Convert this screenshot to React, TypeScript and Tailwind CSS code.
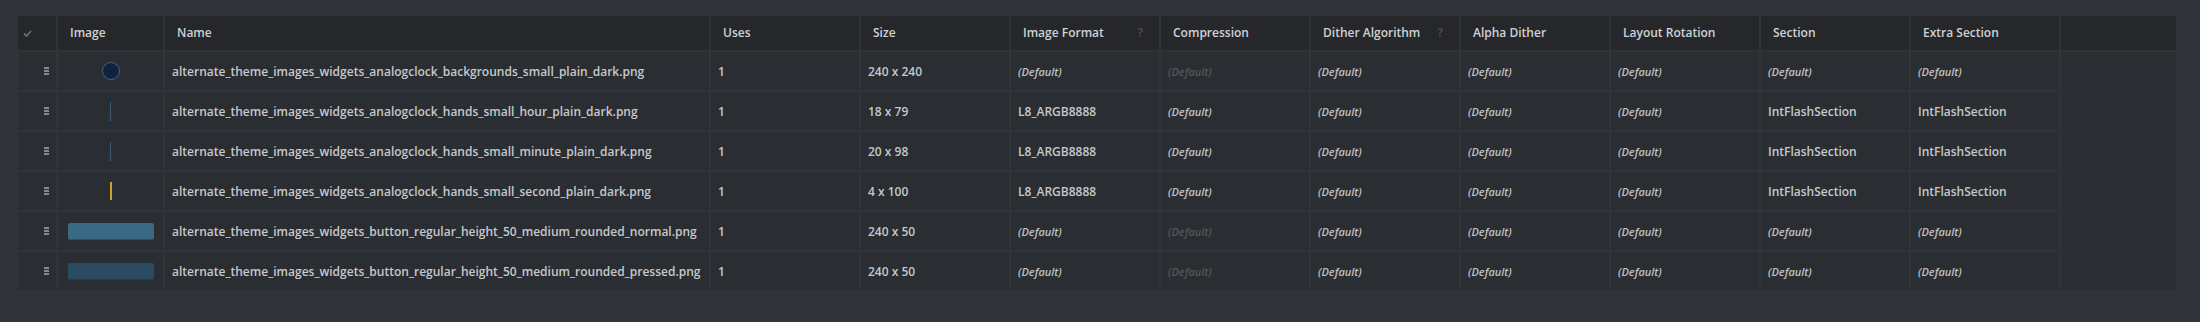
const font = { fontFamily: '"Open Sans", "Noto Sans", sans-serif' };

type Row = {
  thumb: 'clock' | 'hour' | 'minute' | 'second' | 'btn' | 'btnPressed';
  name: string;
  size: string;
  format: string;
  compressionDisabled: boolean;
  section: string;
};

const rows: Row[] = [
  { thumb: 'clock', name: 'alternate_theme_images_widgets_analogclock_backgrounds_small_plain_dark.png', size: '240 x 240', format: '', compressionDisabled: true, section: '' },
  { thumb: 'hour', name: 'alternate_theme_images_widgets_analogclock_hands_small_hour_plain_dark.png', size: '18 x 79', format: 'L8_ARGB8888', compressionDisabled: false, section: 'IntFlashSection' },
  { thumb: 'minute', name: 'alternate_theme_images_widgets_analogclock_hands_small_minute_plain_dark.png', size: '20 x 98', format: 'L8_ARGB8888', compressionDisabled: false, section: 'IntFlashSection' },
  { thumb: 'second', name: 'alternate_theme_images_widgets_analogclock_hands_small_second_plain_dark.png', size: '4 x 100', format: 'L8_ARGB8888', compressionDisabled: false, section: 'IntFlashSection' },
  { thumb: 'btn', name: 'alternate_theme_images_widgets_button_regular_height_50_medium_rounded_normal.png', size: '240 x 50', format: '', compressionDisabled: true, section: '' },
  { thumb: 'btnPressed', name: 'alternate_theme_images_widgets_button_regular_height_50_medium_rounded_pressed.png', size: '240 x 50', format: '', compressionDisabled: true, section: '' },
];

function Thumb({ kind }: { kind: Row['thumb'] }) {
  if (kind === 'clock')
    return <div className="w-[18px] h-[18px] rounded-full bg-[#0f2240] border border-[#3f6385]" />;
  if (kind === 'hour' || kind === 'minute')
    return (
      <div className="flex flex-col items-center">
        <div className="w-px h-[16px] bg-[#3c5a78]" />
        <div className="w-[3px] h-[3px] rounded-full border border-[#3c5a78]" />
      </div>
    );
  if (kind === 'second') return <div className="w-[2px] h-[18px] bg-[#d0a02a]" />;
  if (kind === 'btn')
    return <div className="w-[86px] h-[17px] rounded-[2px] bg-[#3a6983] border-b border-[#2c4f65]" />;
  return <div className="w-[86px] h-[17px] rounded-[2px] bg-[#2a4b62] border-b border-[#223d50]" />;
}

function Def({ dim }: { dim?: boolean }) {
  return (
    <span className={`italic text-[11px] ${dim ? 'text-[#54575c]' : 'text-[#bfc1c4]'}`}>(Default)</span>
  );
}

function Head({ label, help }: { label: string; help?: boolean }) {
  return (
    <div className="bg-[#25272b] flex items-center justify-between pl-3 pr-3 text-[12px] font-semibold text-[#cfd1d4]">
      <span>{label}</span>
      {help && <span className="text-[#4a4d52] text-[12px] pr-1">?</span>}
    </div>
  );
}

function Cell({ children }: { children: React.ReactNode }) {
  return (
    <div className="bg-[#2a2d31] flex items-center pl-[7px] pr-2 pt-[2px] text-[12px] font-semibold text-[#c6c8cb] whitespace-nowrap overflow-hidden">
      {children}
    </div>
  );
}

export default function App() {
  return (
    <div className="w-[2200px] h-[322px] bg-[#303338] pt-[16px] pl-[18px]" style={font}>
      <div className="grid grid-cols-[38px_105px_544px_repeat(9,148px)_115px] grid-rows-[34px_repeat(6,38px)] gap-[2px] w-max">
        <div className="bg-[#25272b] flex items-center pl-[5px]">
          <svg width="9" height="7" viewBox="0 0 9 7">
            <path d="M1 3.5 L3.5 6 L8 1" stroke="#6a6d72" strokeWidth="1.8" fill="none" />
          </svg>
        </div>
        <Head label="Image" />
        <Head label="Name" />
        <Head label="Uses" />
        <Head label="Size" />
        <Head label="Image Format" help />
        <Head label="Compression" />
        <Head label="Dither Algorithm" help />
        <Head label="Alpha Dither" />
        <Head label="Layout Rotation" />
        <Head label="Section" />
        <Head label="Extra Section" />
        <div className="bg-[#25272b]" />

        {rows.map((r, i) => (
          <div key={r.name} className="contents">
            <div className="bg-[#2a2d31] flex items-center justify-end pr-[7px]">
              <div className="flex flex-col gap-px">
                <div className="w-[5px] h-[2px] bg-[#85888c]" />
                <div className="w-[5px] h-[2px] bg-[#85888c]" />
                <div className="w-[5px] h-[2px] bg-[#85888c]" />
              </div>
            </div>
            <div className="bg-[#2a2d31] flex items-center justify-center">
              <Thumb kind={r.thumb} />
            </div>
            <Cell>{r.name}</Cell>
            <Cell>1</Cell>
            <Cell>{r.size}</Cell>
            <Cell>{r.format ? r.format : <Def />}</Cell>
            <Cell><Def dim={r.compressionDisabled} /></Cell>
            <Cell><Def /></Cell>
            <Cell><Def /></Cell>
            <Cell><Def /></Cell>
            <Cell>{r.section ? r.section : <Def />}</Cell>
            <Cell>{r.section ? r.section : <Def />}</Cell>
            {i === 0 && <div className="bg-[#2b2e32] row-span-6" />}
          </div>
        ))}
      </div>
    </div>
  );
}
